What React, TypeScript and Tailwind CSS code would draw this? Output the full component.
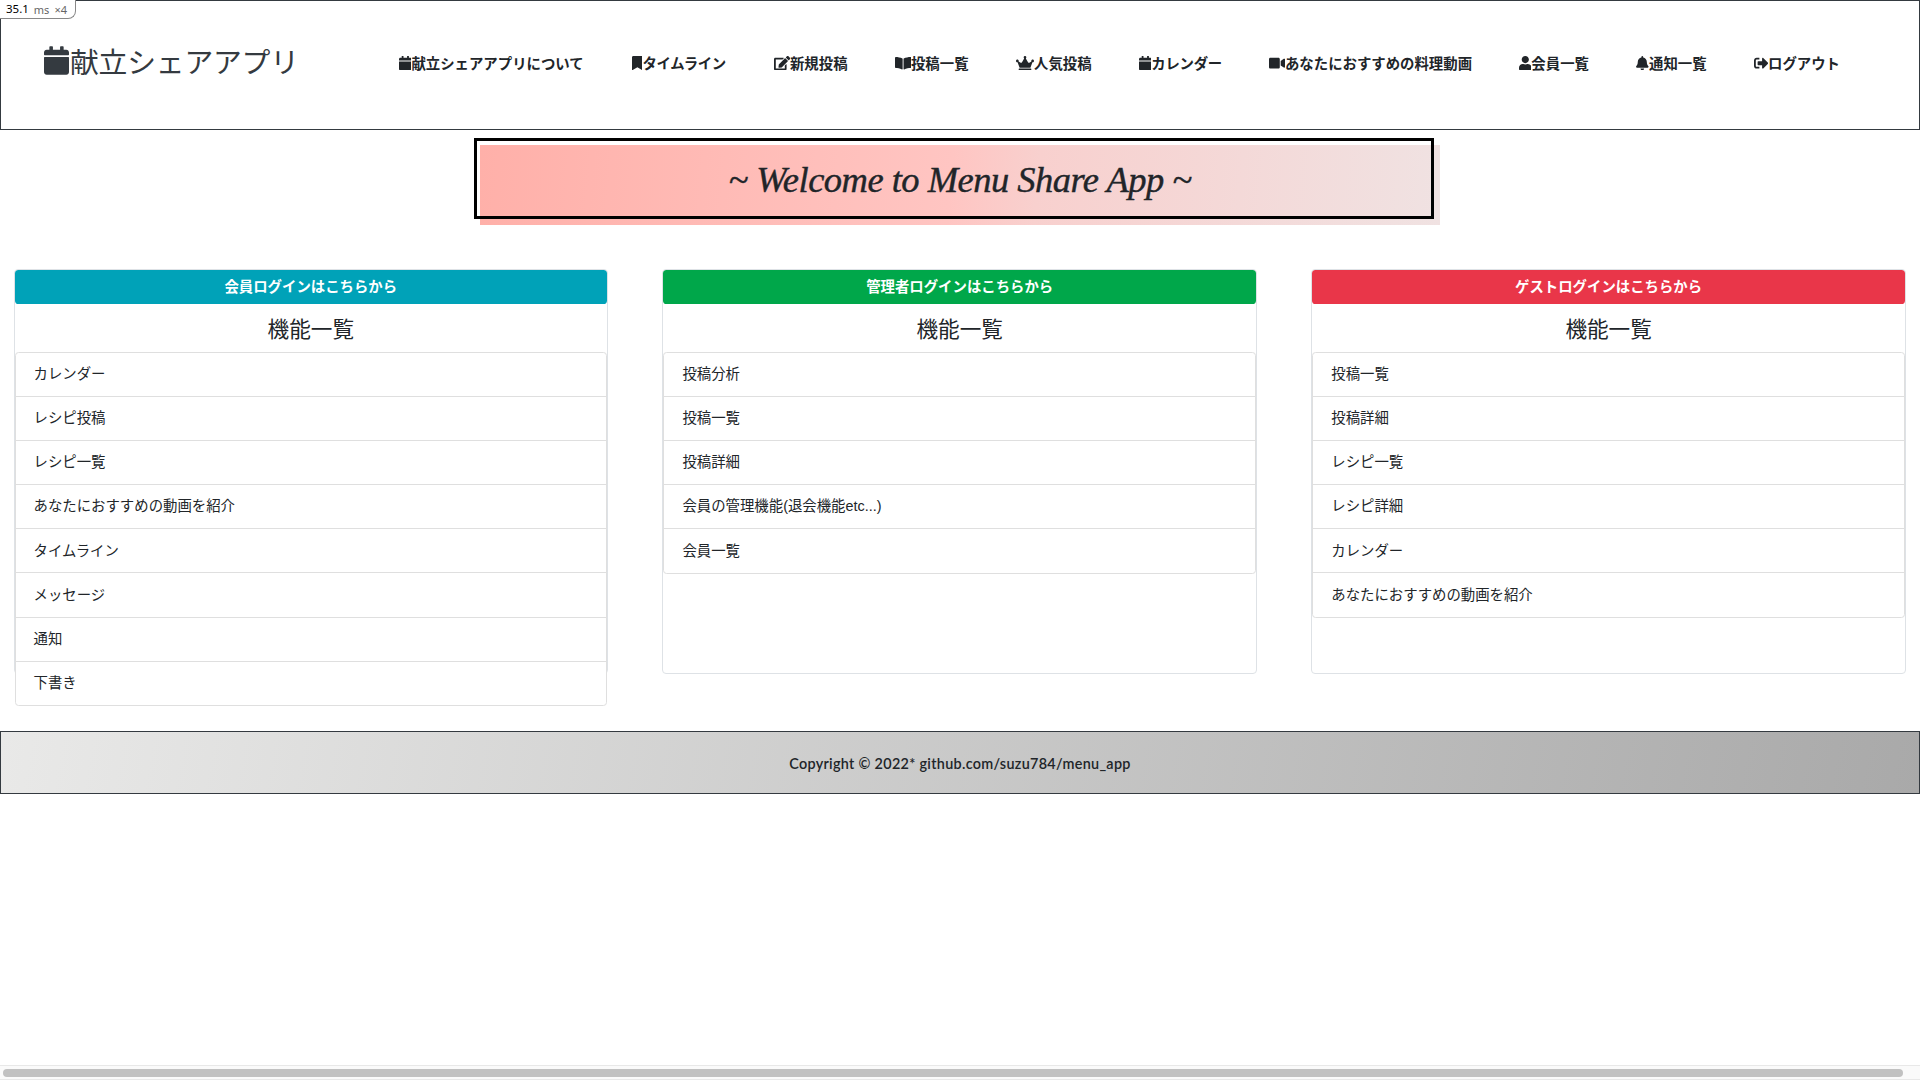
import type { IconType } from "react-icons";
import {
  FaBell, FaBookmark, FaBookOpen, FaCalendar, FaCrown, FaEdit, FaSignOutAlt, FaUser, FaVideo,
} from "react-icons/fa";

const nav: { icon: IconType; label: string; width: string; iconWidth: string; text: string }[] = [
  { icon: FaCalendar, label: "献立シェアアプリについて", width: "w-[232.8px]", iconWidth: "w-[12.6px]", text: "" },
  { icon: FaBookmark, label: "タイムライン", width: "w-[142.2px]", iconWidth: "w-[10.8px]", text: "tracking-[-0.3px]" },
  { icon: FaEdit, label: "新規投稿", width: "w-[121px]", iconWidth: "w-[16.2px]", text: "" },
  { icon: FaBookOpen, label: "投稿一覧", width: "w-[121.3px]", iconWidth: "w-[16.2px]", text: "" },
  { icon: FaCrown, label: "人気投稿", width: "w-[122.7px]", iconWidth: "w-[18px]", text: "" },
  { icon: FaCalendar, label: "カレンダー", width: "w-[130px]", iconWidth: "w-[12.6px]", text: "tracking-[-0.3px]" },
  { icon: FaVideo, label: "あなたにおすすめの料理動画", width: "w-[250px]", iconWidth: "w-[16.2px]", text: "" },
  { icon: FaUser, label: "会員一覧", width: "w-[117.7px]", iconWidth: "w-[12.6px]", text: "" },
  { icon: FaBell, label: "通知一覧", width: "w-[117.2px]", iconWidth: "w-[12.6px]", text: "" },
  { icon: FaSignOutAlt, label: "ログアウト", width: "w-[90px]", iconWidth: "w-[14.4px]", text: "" },
];

const cards = [
  {
    button: "会員ログインはこちらから",
    color: "bg-[#00a2b8]",
    items: ["カレンダー", "レシピ投稿", "レシピ一覧", "あなたにおすすめの動画を紹介", "タイムライン", "メッセージ", "通知", "下書き"],
  },
  {
    button: "管理者ログインはこちらから",
    color: "bg-[#00a74a]",
    items: ["投稿分析", "投稿一覧", "投稿詳細", "会員の管理機能(退会機能etc...)", "会員一覧"],
  },
  {
    button: "ゲストログインはこちらから",
    color: "bg-[#e93649]",
    items: ["投稿一覧", "投稿詳細", "レシピ一覧", "レシピ詳細", "カレンダー", "あなたにおすすめの動画を紹介"],
  },
];

export default function App() {
  return (
    <div className="relative flex h-[1080px] w-[1920px] flex-col overflow-hidden bg-white font-['Liberation_Sans','Noto_Sans_CJK_JP',sans-serif] text-[14.4px] leading-[21.6px] text-[#212529]">
      <header className="flex h-[130px] shrink-0 items-start border border-[#343a40] pl-[43px]">
        <div className="mt-[35px] flex h-[50px] w-[354.8px] items-center font-['Noto_Sans_CJK_JP',sans-serif] text-[28.8px] leading-[50px] text-[#343a40]">
          <FaCalendar className="relative -top-px h-[29px] w-[25px] shrink-0" />
          <span className="ml-[1px] whitespace-nowrap font-normal tracking-[-0.2px]">献立シェアアプリ</span>
        </div>
        <nav className="mt-[51px] flex font-['Noto_Sans_CJK_JP',sans-serif] font-bold">
          {nav.map(({ icon: Icon, label, width, iconWidth, text }) => (
            <a key={label} className={`flex shrink-0 items-center whitespace-nowrap ${width}`}>
              <Icon className={`h-[14.4px] shrink-0 ${iconWidth}`} />
              <span className={text}>{label}</span>
            </a>
          ))}
        </nav>
      </header>

      <div className="relative ml-[480px] mt-[15px] flex h-[80px] w-[960px] shrink-0 items-center justify-center bg-[linear-gradient(95deg,#ffb0a9_0%,#ffc5c2_49%,#f8d0ce_58%,#f0e2e2_100%)]">
        <div className="absolute -left-[6px] -top-[7px] h-[81px] w-[960px] border-[3px] border-black" />
        <h1 className="relative -top-[5px] whitespace-nowrap font-['Liberation_Serif',serif] text-[36.5px] font-normal italic leading-none tracking-[-0.52px] [-webkit-text-stroke:0.4px_#212529]">
          ~ Welcome to Menu Share App ~
        </h1>
      </div>

      <main className="mt-[44px] flex h-[462px] shrink-0 gap-[54.3px] pl-[13.5px]">
        {cards.map((card) => (
          <section key={card.button} className="h-[405px] w-[594.6px] shrink-0 rounded-[4px] border border-[#dee2e6]">
            <div className={`flex h-[34px] items-center justify-center rounded-[3.6px] pt-[1px] font-bold text-white ${card.color}`}>
              {card.button}
            </div>
            <h2 className="flex h-[48px] items-center justify-center pt-[4px] text-[21.6px] font-normal">機能一覧</h2>
            <ul className="divide-y divide-[#dfdfdf] rounded-[3.6px] border border-[#dfdfdf] bg-white">
              {card.items.map((item) => (
                <li key={item} className="h-[44.1px] px-[18px] pt-[11.2px] last:h-[43.2px]">{item}</li>
              ))}
            </ul>
          </section>
        ))}
      </main>

      <footer className="flex h-[63px] shrink-0 items-center justify-center border border-[#343a40] bg-[linear-gradient(100deg,#e9e9e8_0%,#a9a9a9_100%)] pt-[2px] font-['Lato',sans-serif] font-semibold">
        <span className="tracking-[0.3px]">Copyright © 2022* github.com/suzu784/menu_app</span>
      </footer>

      <div className="mt-auto flex h-[15px] items-center border-y border-[#e8e8e8] bg-[#fafafa] pl-[3px]">
        <div className="h-[8px] w-[1900px] rounded-full bg-[#c1c1c1]" />
      </div>

      <div className="absolute left-0 top-0 flex h-[19px] w-[76px] items-center rounded-br-[8px] border-b border-r border-[#888] bg-white pl-[6px] font-['Noto_Sans',sans-serif] text-[11px] leading-none text-[#666]">
        <span className="text-[11.5px] text-black">35.1</span>
        <span className="ml-[5px]">ms</span>
        <span className="ml-[5px]">×4</span>
      </div>
    </div>
  );
}
